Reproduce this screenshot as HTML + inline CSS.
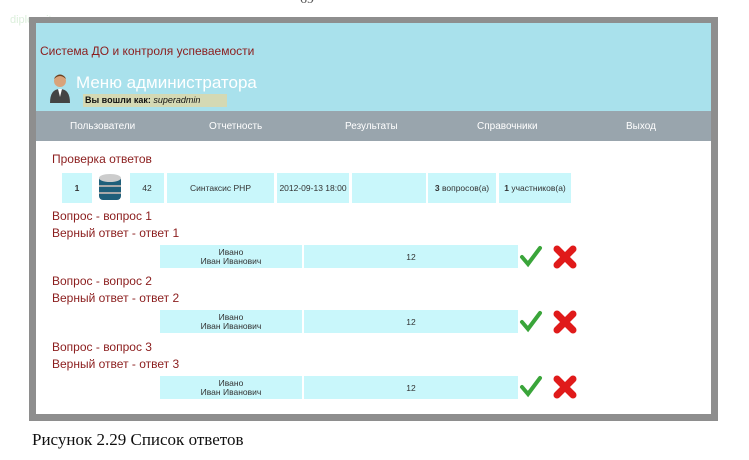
<!DOCTYPE html>
<html><head><meta charset="utf-8"><style>
*{margin:0;padding:0;box-sizing:border-box}
body{width:749px;height:460px;background:#fff;position:relative;overflow:hidden;font-family:"Liberation Sans",sans-serif}
.a{position:absolute}
.frame{left:29px;top:17px;width:689px;height:404px;background:#8e8e8e}
.hdr{left:36px;top:23px;width:675px;height:88px;background:#a9e1ec}
.nav{left:36px;top:111px;width:675px;height:30px;background:#99a5ad;color:#fff;font-size:10px}
.nav span{position:absolute;top:10px}
.cont{left:36px;top:141px;width:675px;height:273px;background:#fff}
.red{color:#8b1d1d;font-size:12px}
.c{position:absolute;background:#c9f7fb;font-size:8.5px;color:#333;text-align:center;display:flex;align-items:center;justify-content:center}
</style></head><body>
<div class="a" style="left:300px;top:-8px;font-family:'Liberation Serif';font-size:14px;color:#555">69</div>
<div class="a" style="left:10px;top:14px;font-size:11px;color:#dcefdc">diplom-it.ru</div>
<div class="a frame"></div>
<div class="a hdr"></div>
<div class="a red" style="left:40px;top:44px;font-size:12px">Система ДО и контроля успеваемости</div>
<svg class="a" style="left:48px;top:73px" width="24" height="30" viewBox="0 0 24 30"><circle cx="12" cy="8" r="6" fill="#d9a37a"/><path d="M6 6Q12 0 18 6L17 4Q12-1 7 4Z" fill="#6b4020"/><path d="M2 30Q2 16 12 16Q22 16 22 30Z" fill="#444"/><path d="M10 16L12 24L14 16Z" fill="#fff"/></svg>
<div class="a" style="left:76px;top:73px;font-size:17px;color:#fff">Меню администратора</div>
<div class="a" style="left:83px;top:94px;width:144px;height:13px;background:#d4d9b4;font-size:9px;padding:1px 2px;color:#111"><b>Вы вошли как:</b> <i>superadmin</i></div>
<div class="a nav"><span style="left:34px">Пользователи</span><span style="left:173px">Отчетность</span><span style="left:309px">Результаты</span><span style="left:441px">Справочники</span><span style="left:590px">Выход</span></div>
<div class="a cont"></div>
<div class="a red" style="left:52px;top:152px">Проверка ответов</div>
<div class="c" style="left:62px;top:173px;width:30px;height:30px"><b>1</b></div>
<svg class="a" style="left:97px;top:173px" width="26" height="30"><rect x="2" y="3" width="22" height="24" rx="4" fill="#1f5f7a"/><ellipse cx="13" cy="5" rx="11" ry="4" fill="#ccc"/><rect x="2" y="12" width="22" height="2" fill="#aaa"/><rect x="2" y="19" width="22" height="2" fill="#aaa"/></svg>
<div class="c" style="left:130px;top:173px;width:34px;height:30px">42</div>
<div class="c" style="left:167px;top:173px;width:107px;height:30px">Синтаксис PHP</div>
<div class="c" style="left:277px;top:173px;width:72px;height:30px">2012-09-13 18:00</div>
<div class="c" style="left:352px;top:173px;width:74px;height:30px"></div>
<div class="c" style="left:428px;top:173px;width:68px;height:30px"><b>3</b>&nbsp;вопросов(а)</div>
<div class="c" style="left:499px;top:173px;width:72px;height:30px"><b>1</b>&nbsp;участников(а)</div>
<div class="a red" style="left:52px;top:208px;line-height:17px">Вопрос - вопрос 1<br>Верный ответ - ответ 1</div>
<div class="a red" style="left:52px;top:273px;line-height:17px">Вопрос - вопрос 2<br>Верный ответ - ответ 2</div>
<div class="a red" style="left:52px;top:339px;line-height:17px">Вопрос - вопрос 3<br>Верный ответ - ответ 3</div>
<div class="c" style="left:160px;top:245px;width:142px;height:23px;line-height:9px">Ивано<br>Иван Иванович</div><div class="c" style="left:304px;top:245px;width:214px;height:23px">12</div>
<div class="c" style="left:160px;top:310px;width:142px;height:23px;line-height:9px">Ивано<br>Иван Иванович</div><div class="c" style="left:304px;top:310px;width:214px;height:23px">12</div>
<div class="c" style="left:160px;top:376px;width:142px;height:23px;line-height:9px">Ивано<br>Иван Иванович</div><div class="c" style="left:304px;top:376px;width:214px;height:23px">12</div>
<svg class="a" style="left:519px;top:245px" width="62" height="24"><path d="M3 12L9 19L21 3" stroke="#3aa53a" stroke-width="4" fill="none" stroke-linecap="round"/><path d="M38 4L54 20M54 4L38 20" stroke="#e01a1a" stroke-width="7" stroke-linecap="round"/></svg>
<svg class="a" style="left:519px;top:310px" width="62" height="24"><path d="M3 12L9 19L21 3" stroke="#3aa53a" stroke-width="4" fill="none" stroke-linecap="round"/><path d="M38 4L54 20M54 4L38 20" stroke="#e01a1a" stroke-width="7" stroke-linecap="round"/></svg>
<svg class="a" style="left:519px;top:375px" width="62" height="24"><path d="M3 12L9 19L21 3" stroke="#3aa53a" stroke-width="4" fill="none" stroke-linecap="round"/><path d="M38 4L54 20M54 4L38 20" stroke="#e01a1a" stroke-width="7" stroke-linecap="round"/></svg>
<div class="a" style="left:32px;top:430px;font-family:'Liberation Serif',serif;font-size:17px;color:#111">Рисунок 2.29 Список ответов</div>
</body></html>
